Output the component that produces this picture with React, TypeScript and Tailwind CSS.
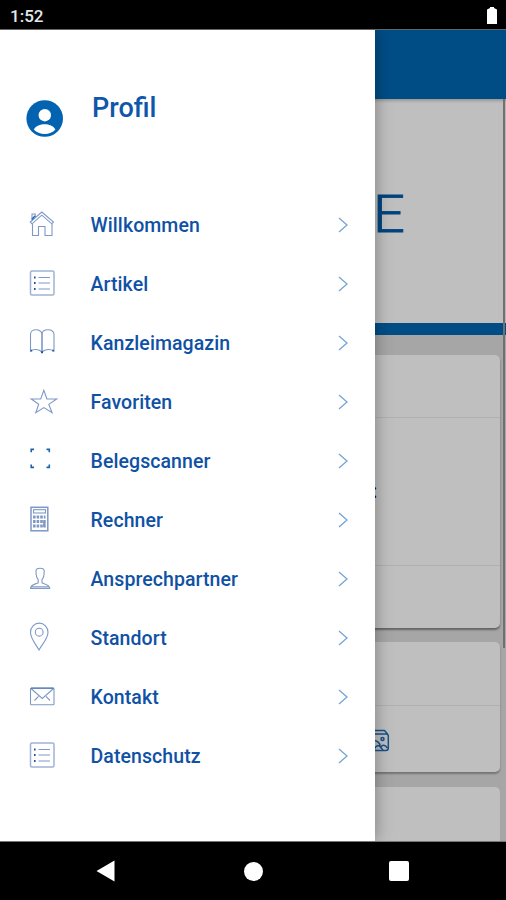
import type { ReactNode } from "react";

type MenuItem = {
  label: string;
  icon: ReactNode;
};

const listIcon = (
  <>
    <rect x="3.5" y="2" width="23.5" height="24" rx="1.5" strokeWidth="1.5" opacity="0.75" />
    <path d="M11.5 8.5H23M11.5 14H23M11.5 20H23" />
    <path d="M7 8.5h1.6M7 14h1.6M7 20h1.6" stroke="#1d55a0" strokeWidth="1.8" />
  </>
);

const MENU_ITEMS: MenuItem[] = [
  {
    label: "Willkommen",
    icon: (
      <>
        <path d="M3.3 12L14.8 2l11.7 10-1.7 1.8-10-8.6-9.8 8.6z" />
        <path d="M5.5 14v11.5h6v-9h6.5v9h7V14M5 9.5V4h3.2v3" />
        <path d="M4.8 9.5L8 6" stroke="#1d6cb5" strokeWidth="1.6" />
      </>
    ),
  },
  { label: "Artikel", icon: listIcon },
  {
    label: "Kanzleimagazin",
    icon: (
      <>
        <path d="M15 24V6.5C15 3.5 12 1.8 9 1.8S3.5 3.5 3.5 6.5V23c2.5-2.2 8.5-2.2 11.5 1 3-3.2 9-3.2 12-1V6.5C27 3.5 24.5 1.8 21 1.8S15 3.5 15 6.5" />
        <path d="M15 5v19" />
        <path d="M3.6 22.6h1.6M14 24.2h2M25.3 22.6h1.6" stroke="#1d55a0" strokeWidth="1.9" />
      </>
    ),
  },
  {
    label: "Favoriten",
    icon: (
      <path d="M16.8 3.3l3.1 8.7h9.8l-7.9 5.4 3.3 8.3-8.3-5.1-8 5.1 2.9-8.4L4.2 12h9.5z" />
    ),
  },
  {
    label: "Belegscanner",
    icon: (
      <path
        d="M4.2 6.2V3.4H7M19.5 3.4h2.8v2.8M22.3 18.6v2.8h-2.8M7 21.4H4.2v-2.8"
        stroke="#1d65aa"
        strokeWidth="1.6"
      />
    ),
  },
  {
    label: "Rechner",
    icon: (
      <>
        <rect x="4" y="2.3" width="16.8" height="23.5" strokeWidth="1.5" />
        <rect x="6.5" y="4.7" width="12" height="3.3" />
        <path
          d="M6 12h12.5M6 16.5h12.5M6 21h12.5"
          strokeWidth="2.8"
          strokeDasharray="2.6 1"
        />
        <path d="M17.3 15.2v7" strokeWidth="2.4" />
      </>
    ),
  },
  {
    label: "Ansprechpartner",
    icon: (
      <path d="M9 7c0-2 2-2.8 4-2.8S17.200 5 17.200 7c0 4-.4 7-2.200 8.500v3.200c2 1.600 7.500 1.500 7.800 5.700H3.500c.3-4.200 5.500-4.100 7.700-5.700v-3.200C9.400 14 9 11 9 7zM4 22.800h18.500" />
    ),
  },
  {
    label: "Standort",
    icon: (
      <>
        <path d="M12 27C9 21.5 3.5 15.5 3.5 9.2a8.6 8.9 0 0 1 17.5 0C21 15.5 15 21.5 12 27z" />
        <circle cx="12.2" cy="9.2" r="3.9" />
      </>
    ),
  },
  {
    label: "Kontakt",
    icon: (
      <>
        <rect x="3.5" y="6" width="23.5" height="16.7" rx="1" />
        <path d="M4 6.5l11.3 10 11.3-10M7.5 18.5l4-4.2M23 18.5l-4-4.2" />
        <path d="M4 6.2h22.6" stroke="#4773b1" />
      </>
    ),
  },
  { label: "Datenschutz", icon: listIcon },
];

function StatusBar() {
  return (
    <header className="flex h-[29px] shrink-0 items-center justify-between bg-black pl-[10px] pr-2 text-white">
      <span className="pt-1 text-[17px] leading-none font-medium text-gray-200">
        1:52
      </span>
      <svg width="12" height="18" viewBox="0 0 12 18" fill="white">
        <path d="M1 3.500L4 2V1h4v1l3 1.500V18H1z" />
      </svg>
    </header>
  );
}

function NavigationBar() {
  return (
    <footer className="flex h-[59px] shrink-0 items-center justify-between border-t border-[#777] bg-black pr-[97px] pl-[96px]">
      <svg width="19" height="22" viewBox="0 0 19 22" fill="white">
        <path d="M0.500 11L18.500 0.500v21z" />
      </svg>
      <div className="ml-[3px] size-[19px] rounded-full bg-white" />
      <div className="size-5 rounded-[2px] bg-white" />
    </footer>
  );
}

function Drawer() {
  return (
    <aside className="absolute inset-y-0 left-0 w-[375px] bg-white shadow-[0_0_16px_rgba(0,0,0,0.35)]">
      <div className="flex h-[165px] pt-[70px] pl-[26px]">
        <svg width="37" height="37" viewBox="0 0 37 37" fill="#0463b1">
          <circle cx="18.7" cy="18.5" r="18.3" />
          <circle cx="18.8" cy="15.2" r="6.2" fill="white" />
          <path
            d="M7.8 29.5c2.200-3.800 6.500-5.300 10.900-5.300s8.700 1.500 10.700 5.300c-2.500 2.900-6.400 4.500-10.700 4.500s-8.200-1.600-10.900-4.500z"
            fill="white"
          />
        </svg>
        <h1 className="-mt-2 ml-[29px] text-[27px] leading-[32px] font-medium text-[#0f57a8]">
          Profil
        </h1>
      </div>

      <ul>
        {MENU_ITEMS.map((item) => (
          <li
            key={item.label}
            className="flex h-[59.1px] items-center pr-[26px] pl-[27px]"
          >
            <svg
              className="shrink-0 overflow-visible"
              width="30"
              height="30"
              viewBox="0 0 30 30"
              fill="none"
              stroke="#7f98c6"
              strokeWidth="1.1"
            >
              {item.icon}
            </svg>
            <span className="ml-[33.5px] flex-1 pt-[2px] text-[19.5px] leading-6 font-medium tracking-[0.08px] text-[#0f51a5]">
              {item.label}
            </span>
            <svg
              width="11"
              height="16"
              viewBox="0 0 11 16"
              fill="none"
              stroke="#74a5d5"
              strokeWidth="1.3"
            >
              <path d="M1 1l8 7-8 7" />
            </svg>
          </li>
        ))}
      </ul>
    </aside>
  );
}

function Page() {
  return (
    <div className="flex h-full flex-col bg-[#a6a6a6]">
      <div className="h-[69px] shrink-0 bg-[#004d86]" />
      <div className="flex h-[224px] shrink-0 justify-end bg-[#bfbfbf] pt-[86px] pr-[101px] shadow-[inset_0_3px_3px_-1px_rgba(0,0,0,0.2)]">
        <span className="origin-right scale-x-[1.1] text-[51px] leading-[60px] font-light text-[#00447f] [-webkit-text-stroke:0.8px_#00447f]">
          E
        </span>
      </div>
      <div className="h-3 shrink-0 bg-[#004d86]" />

      <div className="mt-5 mr-[6px] flex h-[273px] shrink-0 flex-col rounded-[5px] bg-[#bfbfbf] shadow-[0_2px_2px_rgba(0,0,0,0.4)]">
        <div className="h-[63px] border-b border-[#b0b0b0]" />
        <div className="h-[148px] border-b border-[#b0b0b0] pt-[61px] pl-[372px] text-[20px] leading-6 font-medium text-black">
          :
        </div>
      </div>

      <div className="mt-[14px] mr-[6px] h-[130px] shrink-0 rounded-[5px] bg-[#bfbfbf] shadow-[0_2px_2px_rgba(0,0,0,0.3)]">
        <div className="h-16 border-b border-[#b0b0b0]" />
        <svg
          className="mt-[22px] ml-[366px]"
          width="24"
          height="24"
          viewBox="0 0 24 24"
          fill="none"
          stroke="#17528b"
          strokeWidth="1.5"
        >
          <path d="M2 2.500h16.500l3 3.500M1 6h19q2.300 0 2.300 2v12q0 2.500-2.500 2.500H1z" />
          <circle cx="16.5" cy="11" r="1.5" />
          <path d="M8 12.500c3 0 6 2.500 6 5.500M8 22c1-3 3-4.500 5-4.500l4 4.500M15 19c1.500-2.500 4-2.500 6.500 1" />
        </svg>
      </div>

      <div className="mt-[15px] mr-[6px] flex-1 rounded-t-[5px] bg-[#bfbfbf]" />
    </div>
  );
}

export default function App() {
  return (
    <div className="flex h-[900px] w-[506px] flex-col overflow-hidden bg-black font-['Roboto',sans-serif]">
      <StatusBar />
      <main className="relative h-[812px] shrink-0 overflow-hidden border-t border-[#666]">
        <Page />
        <div className="absolute top-[69px] right-px h-[549px] w-[2px] bg-[#707070]" />
        <Drawer />
      </main>
      <NavigationBar />
    </div>
  );
}
